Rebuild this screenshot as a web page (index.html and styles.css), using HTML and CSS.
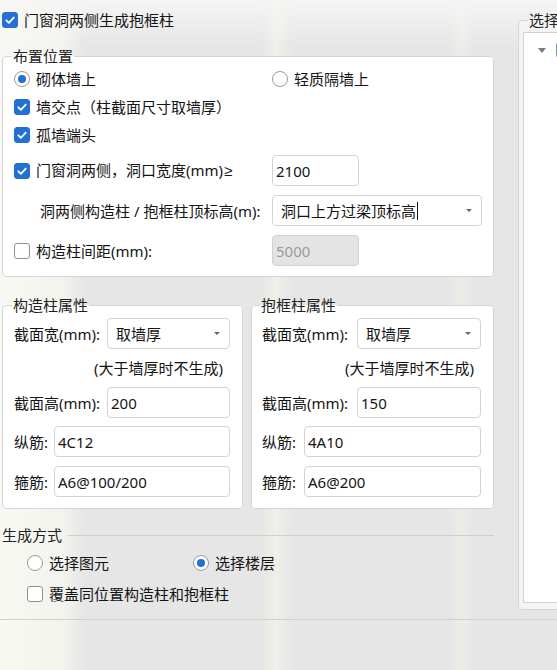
FILE: index.html
```html
<!DOCTYPE html>
<html lang="zh-CN">
<head>
<meta charset="utf-8">
<title>门窗洞两侧生成抱框柱</title>
<link rel="stylesheet" href="styles.css">
</head>
<body>
<div class="main">
  <div class="left">
    <label class="check">
      <span class="box checked"><svg viewBox="0 0 16 16"><path d="M3.8 8.3 L6.7 11.2 L12.3 5.2"/></svg></span>
      <span>门窗洞两侧生成抱框柱</span>
    </label>

    <fieldset class="group place">
      <legend>布置位置</legend>
      <div class="row-s">
        <label class="check col1"><span class="radio on"></span><span>砌体墙上</span></label>
        <label class="check"><span class="radio"></span><span>轻质隔墙上</span></label>
      </div>
      <div class="row-s">
        <label class="check"><span class="box checked"><svg viewBox="0 0 16 16"><path d="M3.8 8.3 L6.7 11.2 L12.3 5.2"/></svg></span><span>墙交点（柱截面尺寸取墙厚）</span></label>
      </div>
      <div class="row-s">
        <label class="check"><span class="box checked"><svg viewBox="0 0 16 16"><path d="M3.8 8.3 L6.7 11.2 L12.3 5.2"/></svg></span><span>孤墙端头</span></label>
      </div>
      <div class="row-f first">
        <label class="check col1"><span class="box checked"><svg viewBox="0 0 16 16"><path d="M3.8 8.3 L6.7 11.2 L12.3 5.2"/></svg></span><span>门窗洞两侧，洞口宽度(mm)<span class="sym">≥</span></span></label>
        <div class="input short">2100</div>
      </div>
      <div class="row-f">
        <span class="col1 indent">洞两侧构造柱 / 抱框柱顶标高(m):</span>
        <div class="input combo wide"><span class="combo-text">洞口上方过梁顶标高<span class="caret"></span></span><span class="arrow"></span></div>
      </div>
      <div class="row-f">
        <label class="check col1"><span class="box"></span><span>构造柱间距(mm):</span></label>
        <div class="input short disabled">5000</div>
      </div>
    </fieldset>

    <div class="props">
      <fieldset class="group prop g-col">
        <legend>构造柱属性</legend>
        <div class="prow first">
          <span class="lbl-w">截面宽(mm):</span>
          <div class="input combo grow"><span class="combo-text">取墙厚</span><span class="arrow"></span></div>
        </div>
        <div class="note">(大于墙厚时不生成)</div>
        <div class="prow">
          <span class="lbl-w">截面高(mm):</span>
          <div class="input grow">200</div>
        </div>
        <div class="prow gap8">
          <span class="lbl-n">纵筋:</span>
          <div class="input grow">4C12</div>
        </div>
        <div class="prow gap9">
          <span class="lbl-n">箍筋:</span>
          <div class="input grow">A6@100/200</div>
        </div>
      </fieldset>

      <fieldset class="group prop g-frame">
        <legend>抱框柱属性</legend>
        <div class="prow first">
          <span class="lbl-w">截面宽(mm):</span>
          <div class="input combo grow"><span class="combo-text">取墙厚</span><span class="arrow"></span></div>
        </div>
        <div class="note">(大于墙厚时不生成)</div>
        <div class="prow">
          <span class="lbl-w">截面高(mm):</span>
          <div class="input grow">150</div>
        </div>
        <div class="prow gap8">
          <span class="lbl-n">纵筋:</span>
          <div class="input grow">4A10</div>
        </div>
        <div class="prow gap9">
          <span class="lbl-n">箍筋:</span>
          <div class="input grow">A6@200</div>
        </div>
      </fieldset>
    </div>

    <div class="gen-title">生成方式</div>
    <div class="gen-row radios">
      <label class="check gen-col1"><span class="radio"></span><span>选择图元</span></label>
      <label class="check"><span class="radio on"></span><span>选择楼层</span></label>
    </div>
    <div class="gen-row cover">
      <label class="check"><span class="box"></span><span>覆盖同位置构造柱和抱框柱</span></label>
    </div>
  </div>

  <fieldset class="select">
    <legend>选择</legend>
    <div class="tree">
      <div class="tree-row">
        <span class="tri"></span>
        <span class="box partial"></span>
      </div>
    </div>
  </fieldset>
</div>
<div class="footer-line"></div>
</body>
</html>
```

FILE: styles.css
```css
html, body {
  margin: 0;
  padding: 0;
  overflow: hidden;
}

body {
  width: 557px;
  height: 670px;
  font-family: "Noto Sans", "Noto Sans CJK SC", sans-serif;
  font-size: 15px;
  line-height: 20px;
  color: #141414;
  background-color: #e6e6e6;
  background-image:
    linear-gradient(to bottom, rgba(246, 246, 246, 0.9) 0, rgba(246, 246, 246, 0) 48px),
    linear-gradient(to right, rgba(250, 250, 244, 0.95) 0, rgba(247, 247, 240, 0.8) 62px, rgba(240, 240, 236, 0) 84px),
    linear-gradient(to right, rgba(240, 240, 232, 0) 262px, rgba(242, 242, 232, 0.8) 276px, rgba(240, 240, 232, 0) 292px),
    linear-gradient(to right, rgba(240, 240, 232, 0) 450px, rgba(240, 240, 232, 0.7) 462px, rgba(240, 240, 232, 0) 474px);
}

.main {
  display: flex;
  align-items: flex-start;
  padding: 10px 0 0 2px;
}

.left {
  width: 492px;
  flex: none;
}

/* check boxes and radios */
.check {
  display: flex;
  align-items: center;
  gap: 6px;
  height: 20px;
  white-space: nowrap;
}

.sym {
  font-family: "Liberation Sans", "DejaVu Sans", sans-serif;
  margin-left: 1px;
}

.box {
  width: 16px;
  height: 16px;
  box-sizing: border-box;
  border: 1px solid #8f8f8f;
  border-radius: 3px;
  background: #fff;
  flex: none;
  display: flex;
}

.box.checked {
  background: #2171d9;
  border-color: #2171d9;
}

.box svg {
  width: 14px;
  height: 14px;
}

.box svg path {
  fill: none;
  stroke: #fff;
  stroke-width: 2;
  stroke-linecap: round;
  stroke-linejoin: round;
}

.radio {
  width: 16px;
  height: 16px;
  box-sizing: border-box;
  border: 1px solid #9a9a9a;
  border-radius: 50%;
  background: #fff;
  flex: none;
  display: flex;
  align-items: center;
  justify-content: center;
}

.radio.on::after {
  content: "";
  width: 8px;
  height: 8px;
  border-radius: 50%;
  background: #2171d9;
}

/* group boxes */
.group {
  margin: 0;
  border: 1px solid #d5d5d5;
  border-radius: 4px;
  background: #fff;
  min-width: 0;
}

.group legend {
  padding: 0 1px;
  margin-left: -2px;
  line-height: 18px;
  color: #222;
}

.place {
  margin-top: 17px;
  padding: 0 11px 10px;
}

.row-s {
  height: 28px;
  display: flex;
  align-items: center;
}

.row-f {
  height: 31px;
  margin-top: 9px;
  display: flex;
  align-items: center;
}

.row-f.first {
  margin-top: 6px;
}

.col1 {
  width: 258px;
  flex: none;
}

.indent {
  box-sizing: border-box;
  padding-left: 26px;
  white-space: nowrap;
}

/* inputs */
.input {
  height: 31px;
  box-sizing: border-box;
  border: 1px solid #d3d3d3;
  border-radius: 4px;
  background: #fff;
  padding: 0 3px;
  display: flex;
  align-items: center;
  white-space: nowrap;
  color: #141414;
}

.input.short {
  width: 87px;
}

.input.wide {
  width: 210px;
}

.input.grow {
  flex: 1;
  min-width: 0;
}

.input.disabled {
  background: #e4e4e4;
  border-color: #cdd2da;
  color: #9b9b9b;
}

.combo {
  padding: 0 8px;
  justify-content: space-between;
}

.combo-text {
  display: flex;
  align-items: center;
}

.caret {
  width: 0;
  height: 18px;
  border-left: 1px solid #111;
  margin-left: 1px;
}

.arrow {
  width: 0;
  height: 0;
  border-left: 3px solid transparent;
  border-right: 3px solid transparent;
  border-top: 3px solid #666;
  margin-right: 1px;
}

/* property groups */
.props {
  display: grid;
  grid-template-columns: 241px 243px;
  column-gap: 8px;
  margin-top: 19px;
}

.prop {
  padding: 0 12px 11px 11px;
}

.g-frame {
  padding-left: 10px;
}

.prow {
  height: 31px;
  display: flex;
  align-items: center;
}

.prow.first {
  margin-top: 4px;
}

.prow.gap8 {
  margin-top: 8px;
}

.prow.gap9 {
  margin-top: 9px;
}

.lbl-w,
.lbl-n {
  flex: none;
  white-space: nowrap;
}

.g-col .lbl-w { width: 93px; }
.g-col .lbl-n { width: 40px; }
.g-frame .lbl-w { width: 95px; }
.g-frame .lbl-n { width: 42px; }

.note {
  height: 38px;
  display: flex;
  align-items: center;
  justify-content: flex-end;
  padding-right: 7px;
  white-space: nowrap;
}

/* generation mode */
.gen-title {
  margin-top: 16px;
  height: 20px;
  display: flex;
  align-items: center;
  gap: 6px;
  color: #222;
}

.gen-title::after {
  content: "";
  flex: 1;
  height: 1px;
  background: #cfcfcf;
}

.gen-row {
  height: 24px;
  display: flex;
  align-items: center;
  padding-left: 25px;
}

.gen-row.radios {
  margin-top: 6px;
}

.gen-row.cover {
  margin-top: 7px;
}

.gen-col1 {
  width: 166px;
  flex: none;
}

/* right panel */
.select {
  flex: none;
  width: 220px;
  margin: 1px 0 0 24px;
  padding: 3px 4px 6px;
  border: 1px solid #d5d5d5;
  border-radius: 4px;
  background: #f4f4f4;
  min-width: 0;
}

.select legend {
  padding: 0 1px;
  margin-left: 5px;
  line-height: 18px;
  white-space: nowrap;
  color: #222;
}

.tree {
  height: 569px;
  border: 1px solid #d2d2d2;
  background: #fff;
}

.tree-row {
  margin-top: 5px;
  height: 24px;
  display: flex;
  align-items: center;
  padding-left: 14px;
  gap: 10px;
}

.tri {
  width: 0;
  height: 0;
  border-left: 4px solid transparent;
  border-right: 4px solid transparent;
  border-top: 5px solid #7a7a7a;
}

.box.partial {
  border-color: #7f93b0;
}

.footer-line {
  height: 1px;
  margin-top: 9px;
  background: #d0d0d0;
}
```
